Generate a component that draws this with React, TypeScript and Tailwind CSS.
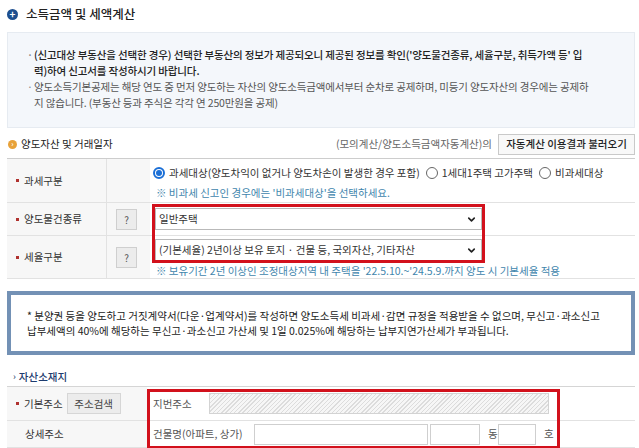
import React from 'react';
import { ChevronDown } from 'lucide-react';

const Bullet = () => <span className="mr-[5px] inline-block h-[3px] w-[3px] bg-[#b0322f]" />;

const Radio = ({ checked, label }: { checked?: boolean; label: string }) => (
  <span className="inline-flex items-center gap-[4px]">
    {checked ? (
      <span className="flex h-[12px] w-[12px] items-center justify-center rounded-full border-[2px] border-[#1b6fd6] bg-white">
        <span className="h-[6px] w-[6px] rounded-full bg-[#1b6fd6]" />
      </span>
    ) : (
      <span className="h-[12px] w-[12px] rounded-full border border-[#666] bg-white" />
    )}
    <span>{label}</span>
  </span>
);

const HelpButton = () => (
  <span className="flex h-[21px] w-[21px] items-center justify-center border border-[#cfcfcf] bg-[#ececec] text-[10px] text-[#555]">?</span>
);

const FakeSelect = ({ value }: { value: string }) => (
  <div className="flex h-[22px] w-[327px] items-center justify-between border border-[#b9b9b9] bg-white pl-[3px] pr-[4px] text-[#333]">
    <span>{value}</span>
    <ChevronDown size={11} strokeWidth={3.5} className="text-[#222]" />
  </div>
);

const Input = ({ className }: { className: string }) => (
  <span className={`block h-[21px] border border-[#cfcfcf] bg-white ${className}`} />
);

export default function App() {
  return (
    <div className="w-[639px] h-[448px] overflow-hidden bg-white pl-[7px] pr-[4px] font-['Noto_Sans_CJK_KR','Liberation_Sans',sans-serif] text-[10.5px] text-[#333]">
      {/* title */}
      <div className="flex h-[32px] items-center gap-[8px] pb-[4px]">
        <span className="flex h-[11px] w-[11px] items-center justify-center rounded-full bg-[#1d4f8f] text-[10px] leading-none font-bold text-white">+</span>
        <span className="text-[12.5px] font-medium text-[#222]">소득금액 및 세액계산</span>
      </div>

      {/* info box */}
      <div className="h-[96px] border border-[#e6ebf1] bg-[#f4f7fb] pt-[14px] pl-[19px] leading-[16px] tracking-[-0.15px]">
        <div className="flex font-medium text-[#222]">
          <span className="w-[7px] text-[#888]">·</span>
          <div>
            <div className="whitespace-nowrap">(신고대상 부동산을 선택한 경우) 선택한 부동산의 정보가 제공되오니 제공된 정보를 확인('양도물건종류, 세율구분, 취득가액 등' 입</div>
            <div className="whitespace-nowrap">력)하여 신고서를 작성하시기 바랍니다.</div>
          </div>
        </div>
        <div className="flex text-[#555]">
          <span className="w-[7px] text-[#888]">·</span>
          <div>
            <div className="whitespace-nowrap">양도소득기본공제는 해당 연도 중 먼저 양도하는 자산의 양도소득금액에서부터 순차로 공제하며, 미등기 양도자산의 경우에는 공제하</div>
            <div className="whitespace-nowrap">지 않습니다. (부동산 등과 주식은 각각 연 250만원을 공제)</div>
          </div>
        </div>
      </div>

      {/* section header */}
      <div className="mt-[5px] flex h-[22px] items-center justify-between">
        <div className="flex items-center gap-[4px] pl-[1px]">
          <span className="flex h-[9px] w-[9px] items-center justify-center rounded-full bg-[#e8a23a] text-[7px] leading-none font-bold text-white">›</span>
          <span className="text-[#222]">양도자산 및 거래일자</span>
        </div>
        <div className="flex items-center gap-[6px]">
          <span className="text-[#666]">(모의계산/양도소득금액자동계산)의</span>
          <span className="flex h-[21px] w-[137px] items-center justify-center border border-[#c9c9c9] bg-[#f8f8f8] font-medium text-[#222]">자동계산 이용결과 불러오기</span>
        </div>
      </div>

      {/* table 1 */}
      <div className="relative mt-[3px] grid grid-cols-[100px_43px_1fr] border-t border-[#cdcdcd]">
        <div className="flex h-[44px] items-center border-b border-r border-[#e2e2e2] bg-[#f7f7f7] pl-[9px]"><Bullet />과세구분</div>
        <div className="h-[44px] border-b border-[#e2e2e2] bg-[#f7f7f7]" />
        <div className="h-[44px] border-b border-[#e2e2e2] pl-[3px] pt-[4px]">
          <div className="flex h-[20px] items-center gap-[6px]">
            <Radio checked label="과세대상(양도차익이 없거나 양도차손이 발생한 경우 포함)" />
            <Radio label="1세대1주택 고가주택" />
            <Radio label="비과세대상" />
          </div>
          <div className="flex h-[20px] items-center pl-[3px] text-[#3f86ad]">※ 비과세 신고인 경우에는 '비과세대상'을 선택하세요.</div>
        </div>

        <div className="flex h-[33px] items-center border-b border-r border-[#e2e2e2] bg-[#f7f7f7] pl-[9px]"><Bullet />양도물건종류</div>
        <div className="flex h-[33px] items-center justify-center border-b border-[#e2e2e2] bg-[#f7f7f7] pr-[4px]"><HelpButton /></div>
        <div className="flex h-[33px] items-center border-b border-[#e2e2e2] pl-[5px]"><FakeSelect value="일반주택" /></div>

        <div className="flex h-[43px] items-center border-b border-r border-[#e2e2e2] bg-[#f7f7f7] pl-[9px]"><Bullet />세율구분</div>
        <div className="flex h-[43px] items-center justify-center border-b border-[#e2e2e2] bg-[#f7f7f7] pr-[4px]"><HelpButton /></div>
        <div className="h-[43px] border-b border-[#e2e2e2] pl-[5px] pt-[3px]">
          <FakeSelect value="(기본세율) 2년이상 보유 토지 · 건물 등, 국외자산, 기타자산" />
          <div className="flex h-[18px] items-end pl-[1px] text-[#3f86ad]">※ 보유기간 2년 이상인 조정대상지역 내 주택을 '22.5.10.~'24.5.9.까지 양도 시 기본세율 적용</div>
        </div>

        {/* highlight overlay */}
        <div className="pointer-events-none absolute left-[145px] top-[45px] h-[59px] w-[333px] border-[3px] border-[#d2111c]" />
      </div>

      {/* notice */}
      <div className="mt-[12px] flex h-[64px] flex-col justify-center border-[4px] border-[#7391b5] bg-white pl-[16px] leading-[15px] text-[#222]">
        <div className="whitespace-nowrap">* 분양권 등을 양도하고 거짓계약서(다운·업계약서)를 작성하면 양도소득세 비과세·감면 규정을 적용받을 수 없으며, 무신고·과소신고</div>
        <div className="whitespace-nowrap">납부세액의 40%에 해당하는 무신고·과소신고 가산세 및 1일 0.025%에 해당하는 납부지연가산세가 부과됩니다.</div>
      </div>

      {/* address */}
      <div className="mt-[12px] flex h-[19px] items-center gap-[3px] pl-[6px] font-medium text-[#1d3b6e]">
        <span className="text-[9px]">›</span>
        <span>자산소재지</span>
      </div>
      <div className="relative grid grid-cols-[140px_1fr] border-t border-[#d5d5d5]">
        <div className="flex h-[34px] items-center border-b border-[#e2e2e2] bg-[#f7f7f7] pl-[9px]">
          <Bullet />기본주소
          <span className="ml-[4px] flex h-[21px] w-[54px] items-center justify-center border border-[#d6d6d6] bg-[#ececec] text-[#444]">주소검색</span>
        </div>
        <div className="flex h-[34px] items-center border-b border-[#e2e2e2] pl-[6px]">
          <span className="w-[56px] text-[#555]">지번주소</span>
          <span className="block h-[21px] w-[340px] border border-[#d3d3d3] bg-[repeating-linear-gradient(135deg,#dcdcdc_0px,#dcdcdc_1px,#f6f6f6_1px,#f6f6f6_3px)]" />
        </div>

        <div className="flex h-[27px] items-center border-b border-[#e2e2e2] bg-[#f7f7f7] pl-[18px]">상세주소</div>
        <div className="flex h-[27px] items-center border-b border-[#e2e2e2] pl-[6px] text-[#555]">
          <span className="w-[101px]">건물명(아파트, 상가)</span>
          <Input className="w-[174px]" />
          <Input className="ml-[2px] w-[50px]" />
          <span className="ml-[8px] w-[10px]">동</span>
          <Input className="w-[38px]" />
          <span className="ml-[8px]">호</span>
        </div>

        <div className="pointer-events-none absolute left-[140px] top-[2px] h-[60px] w-[413px] border-[3px] border-[#d2111c]" />
      </div>
    </div>
  );
}
